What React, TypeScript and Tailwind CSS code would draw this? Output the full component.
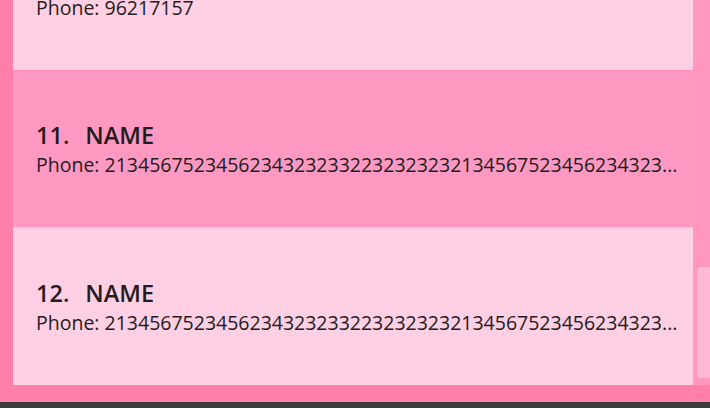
const people = [
  { id: 10, name: 'NAME', phone: '96217157' },
  { id: 11, name: 'NAME', phone: '21345675234562343232332232323232134567523456234323...' },
  { id: 12, name: 'NAME', phone: '21345675234562343232332232323232134567523456234323...' },
];

const selectedId = 11;

function PersonCard({ id, name, phone }: { id: number; name: string; phone: string }) {
  const selected = id === selectedId;
  return (
    <div
      className={
        selected
          ? 'flex h-[157px] shrink-0 flex-col justify-center border-t border-[#ff8fb9] bg-[#ff99c2] pl-[23px] pr-[14px] text-[#221c20]'
          : 'flex h-[158px] shrink-0 flex-col justify-center border-t border-[#ffbfd9] bg-[#ffcfe4] pl-[23px] pr-[14px] text-[#221c20]'
      }
    >
      <div className="flex gap-[16px] text-[23.5px] font-semibold leading-[31px]">
        <span>{id}.</span>
        <span>{name}</span>
      </div>
      <div className="overflow-hidden whitespace-nowrap text-[19.5px] leading-[27px]">Phone: {phone}</div>
    </div>
  );
}

export default function App() {
  return (
    <div className="flex h-[408px] w-[710px] flex-col overflow-hidden bg-[#3c3c3c] font-['Open_Sans',sans-serif]">
      <div className="flex h-[402px] bg-[#ff7fab] pb-[17px] pl-[13px]">
        <div className="flex min-w-0 flex-1 flex-col justify-end overflow-hidden">
          {people.map((p) => (
            <PersonCard key={p.id} {...p} />
          ))}
        </div>
        <div className="w-[17px] bg-[#ff97bf] pl-[4px] pt-[267px]">
          <div className="h-[111px] rounded-l-[4px] bg-[#ffb9d5]" />
        </div>
      </div>
    </div>
  );
}
